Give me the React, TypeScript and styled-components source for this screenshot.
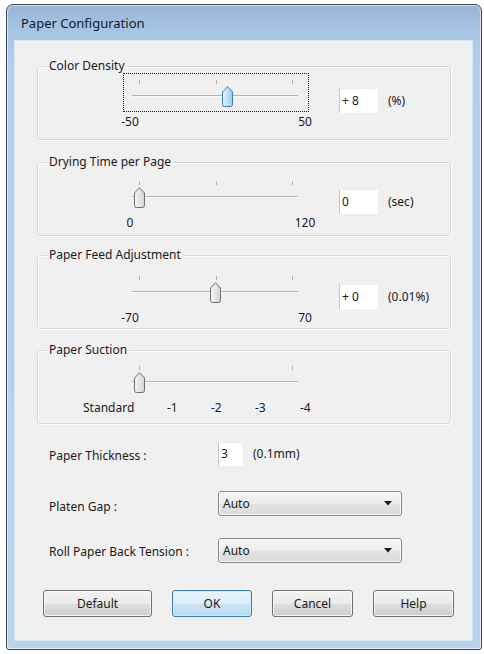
import React, { useId } from 'react'
import styled, { createGlobalStyle } from 'styled-components'

const GlobalStyle = createGlobalStyle`
  body {
    margin: 0;
    background: #ffffff;
    font-family: "Noto Sans", "DejaVu Sans", sans-serif;
    font-size: 12px;
    color: #1a1a1a;
  }
`

// slider geometry, in px inside the slider frame
const TICK_START = 15
const TICK_SPAN = 153

interface SliderProps {
  position: number
  ticks: number[]
  focused?: boolean
  hot?: boolean
}

const Slider = ({ position, ticks, focused, hot }: SliderProps) => {
  const gid = useId()
  const left = TICK_START + position * TICK_SPAN - 5.5
  return (
    <S.SliderFrame $focused={focused}>
      {ticks.map(t => (
        <S.Tick key={t} style={{ left: TICK_START + t * TICK_SPAN }} />
      ))}
      <S.Track />
      <S.Thumb style={{ left }} width='11' height='21' viewBox='0 0 11 21'>
        <defs>
          <linearGradient id={gid} x1='0' y1='0' x2='1' y2='0'>
            <stop offset='0' stopColor={hot ? '#e4f4fd' : '#f6f6f6'} />
            <stop offset='1' stopColor={hot ? '#8fcdf1' : '#d4d4d4'} />
          </linearGradient>
        </defs>
        <path
          d='M0.5 6 L5.5 0.7 L10.5 6 V18.5 Q10.5 20.5 8.5 20.5 H2.5 Q0.5 20.5 0.5 18.5 Z'
          fill={`url(#${gid})`}
          stroke={hot ? '#3c7fb1' : '#707070'}
        />
      </S.Thumb>
    </S.SliderFrame>
  )
}

interface RangeGroupProps {
  title: string
  top: number
  offset: number
  position: number
  ticks?: number[]
  min: string
  max: string
  value: string
  unit: string
  focused?: boolean
}

const RangeGroup = ({ title, top, offset, position, ticks = [0, 0.5, 1], min, max, value, unit, focused }: RangeGroupProps) => (
  <S.Group $top={top}>
    <S.GroupTitle>{title}</S.GroupTitle>
    <S.GroupBody $offset={offset}>
      <S.SliderColumn>
        <Slider position={position} ticks={ticks} focused={focused} hot={focused} />
        <S.Scale>
          <S.ScaleLabel>{min}</S.ScaleLabel>
          <S.ScaleLabel>{max}</S.ScaleLabel>
        </S.Scale>
      </S.SliderColumn>
      <S.ValueBox>{value}</S.ValueBox>
      <S.Unit>{unit}</S.Unit>
    </S.GroupBody>
  </S.Group>
)

const Arrow = () => (
  <svg width='8' height='5' viewBox='0 0 8 5'>
    <path d='M0 0 H8 L4 4.5 Z' fill='#1a1a1a' />
  </svg>
)

export default function App() {
  return (
    <>
      <GlobalStyle />
      <S.Window>
        <S.TitleBar>Paper Configuration</S.TitleBar>
        <S.Client>
          <RangeGroup
            title='Color Density'
            top={25}
            offset={6}
            position={0.58}
            min='-50'
            max='50'
            value='+ 8'
            unit='(%)'
            focused
          />
          <RangeGroup
            title='Drying Time per Page'
            top={22}
            offset={11}
            position={0}
            min='0'
            max='120'
            value='0'
            unit='(sec)'
          />
          <RangeGroup
            title='Paper Feed Adjustment'
            top={19}
            offset={13}
            position={0.5}
            min='-70'
            max='70'
            value='+ 0'
            unit='(0.01%)'
          />
          <S.Group $top={21}>
            <S.GroupTitle>Paper Suction</S.GroupTitle>
            <S.GroupBody $offset={8}>
              <S.SliderColumn>
                <Slider position={0} ticks={[0, 1]} />
                <S.SuctionScale>
                  <span>Standard</span>
                  <span>-1</span>
                  <span>-2</span>
                  <span>-3</span>
                  <span>-4</span>
                </S.SuctionScale>
              </S.SliderColumn>
            </S.GroupBody>
          </S.Group>

          <S.FormRow $top={17}>
            <S.FieldLabel $drop={4}>Paper Thickness :</S.FieldLabel>
            <S.Inline>
              <S.SmallBox>3</S.SmallBox>
              <S.Unit $inline>(0.1mm)</S.Unit>
            </S.Inline>
          </S.FormRow>
          <S.FormRow $top={25}>
            <S.FieldLabel $drop={5}>Platen Gap :</S.FieldLabel>
            <S.Combo>
              <span>Auto</span>
              <Arrow />
            </S.Combo>
          </S.FormRow>
          <S.FormRow $top={22}>
            <S.FieldLabel $drop={2}>Roll Paper Back Tension :</S.FieldLabel>
            <S.Combo>
              <span>Auto</span>
              <Arrow />
            </S.Combo>
          </S.FormRow>

          <S.Buttons>
            <S.Button $width={109}>Default</S.Button>
            <S.Button $width={80} $primary>OK</S.Button>
            <S.Button $width={81}>Cancel</S.Button>
            <S.Button $width={81}>Help</S.Button>
          </S.Buttons>
        </S.Client>
      </S.Window>
    </>
  )
}

const S = {
  Window: styled.div`
    margin: 4px 0 0 6px;
    width: 476px;
    height: 646px;
    box-sizing: border-box;
    display: flex;
    flex-direction: column;
    padding: 0 9px 9px 8px;
    border: 1px solid #3e4a58;
    border-radius: 7px 7px 3px 3px;
    background: linear-gradient(to bottom, #9ab6d6 0px, #aac6e6 30px, #b3cfec 60px, #b9d3ef 100%);
    box-shadow: inset 0 0 0 1px rgba(255, 255, 255, 0.55);
  `,
  TitleBar: styled.div`
    height: 36px;
    display: flex;
    align-items: center;
    padding: 0 0 0 6px;
    font-size: 13px;
    color: #0d1a2a;
  `,
  Client: styled.div`
    flex: 1;
    display: flex;
    flex-direction: column;
    background: #f0f0f0;
    box-shadow: 0 0 0 1px #d8e6f4;
  `,
  Group: styled.div<{ $top: number }>`
    position: relative;
    margin: ${p => p.$top}px 0 0 22px;
    width: 414px;
    height: 74px;
    box-sizing: border-box;
    border: 1px solid #d9d9d9;
    border-radius: 3px;
    box-shadow: inset 1px 1px 0 #ffffff, 1px 1px 0 #ffffff;
  `,
  GroupTitle: styled.span`
    position: absolute;
    top: -9px;
    left: 9px;
    padding: 0 2px;
    line-height: 16px;
    background: #f0f0f0;
  `,
  GroupBody: styled.div<{ $offset: number }>`
    display: flex;
    align-items: flex-start;
    padding: ${p => p.$offset}px 0 0 85px;
  `,
  SliderColumn: styled.div`
    display: flex;
    flex-direction: column;
    width: 186px;
  `,
  SliderFrame: styled.div<{ $focused?: boolean }>`
    position: relative;
    height: 39px;
    box-sizing: border-box;
    border: 1px dotted ${p => (p.$focused ? '#1a1a1a' : 'transparent')};
  `,
  Tick: styled.div`
    position: absolute;
    top: 6px;
    width: 1px;
    height: 4px;
    background: #b0b0b0;
  `,
  Track: styled.div`
    margin: 21px 0 0 8px;
    width: 166px;
    height: 1px;
    background: #b4b4b4;
    border-bottom: 1px solid #fbfbfb;
  `,
  Thumb: styled.svg`
    position: absolute;
    top: 12px;
    display: block;
  `,
  Scale: styled.div`
    display: flex;
    justify-content: space-between;
    margin: 2px -11px 0 -8px;
    line-height: 16px;
  `,
  ScaleLabel: styled.span`
    width: 30px;
    text-align: center;
  `,
  SuctionScale: styled.div`
    display: grid;
    grid-template-columns: 84px 44px 44px 45px auto;
    margin: 2px 0 0 -40px;
    line-height: 16px;
  `,
  ValueBox: styled.div`
    margin: 15px 0 0 30px;
    width: 39px;
    height: 25px;
    box-sizing: border-box;
    padding-left: 2px;
    line-height: 23px;
    background: #ffffff;
    border: 1px solid #ffffff;
    border-left-color: #c4c4c4;
    border-top-color: #ececec;
  `,
  Unit: styled.span<{ $inline?: boolean }>`
    margin: ${p => (p.$inline ? '0 0 0 10px' : '15px 0 0 10px')};
    line-height: 25px;
  `,
  FormRow: styled.div<{ $top: number }>`
    display: grid;
    grid-template-columns: 169px auto;
    align-items: center;
    margin-top: ${p => p.$top}px;
    padding-left: 34px;
  `,
  FieldLabel: styled.span<{ $drop: number }>`
    padding-top: ${p => p.$drop}px;
  `,
  Inline: styled.div`
    display: flex;
    align-items: center;
  `,
  SmallBox: styled.div`
    width: 25px;
    height: 24px;
    box-sizing: border-box;
    padding-left: 2px;
    line-height: 22px;
    background: #ffffff;
    border: 1px solid #ffffff;
    border-left-color: #c4c4c4;
    border-top-color: #ececec;
  `,
  Combo: styled.div`
    width: 184px;
    height: 25px;
    box-sizing: border-box;
    display: flex;
    align-items: center;
    justify-content: space-between;
    padding: 0 9px 0 4px;
    border: 1px solid #8a8a8a;
    border-radius: 3px;
    background: linear-gradient(to bottom, #f6f6f6 0%, #ececec 50%, #e2e2e2 51%, #dddddd 100%);
    box-shadow: inset 0 0 0 1px rgba(255, 255, 255, 0.7);
  `,
  Buttons: styled.div`
    display: flex;
    gap: 20px;
    margin-top: 27px;
    padding-left: 28px;
  `,
  Button: styled.div<{ $width: number; $primary?: boolean }>`
    width: ${p => p.$width}px;
    height: 27px;
    box-sizing: border-box;
    display: flex;
    align-items: center;
    justify-content: center;
    border: 1px solid ${p => (p.$primary ? '#3c7fb1' : '#707070')};
    border-radius: 3px;
    background: ${p =>
      p.$primary
        ? 'linear-gradient(to bottom, #eaf5fc 0%, #dcedf9 50%, #c9e3f5 51%, #bcdcf2 100%)'
        : 'linear-gradient(to bottom, #f2f2f2 0%, #ebebeb 50%, #dddddd 51%, #cfcfcf 100%)'};
    box-shadow: inset 0 0 0 1px ${p => (p.$primary ? 'rgba(200, 235, 255, 0.9)' : 'rgba(255, 255, 255, 0.75)')};
  `
}
